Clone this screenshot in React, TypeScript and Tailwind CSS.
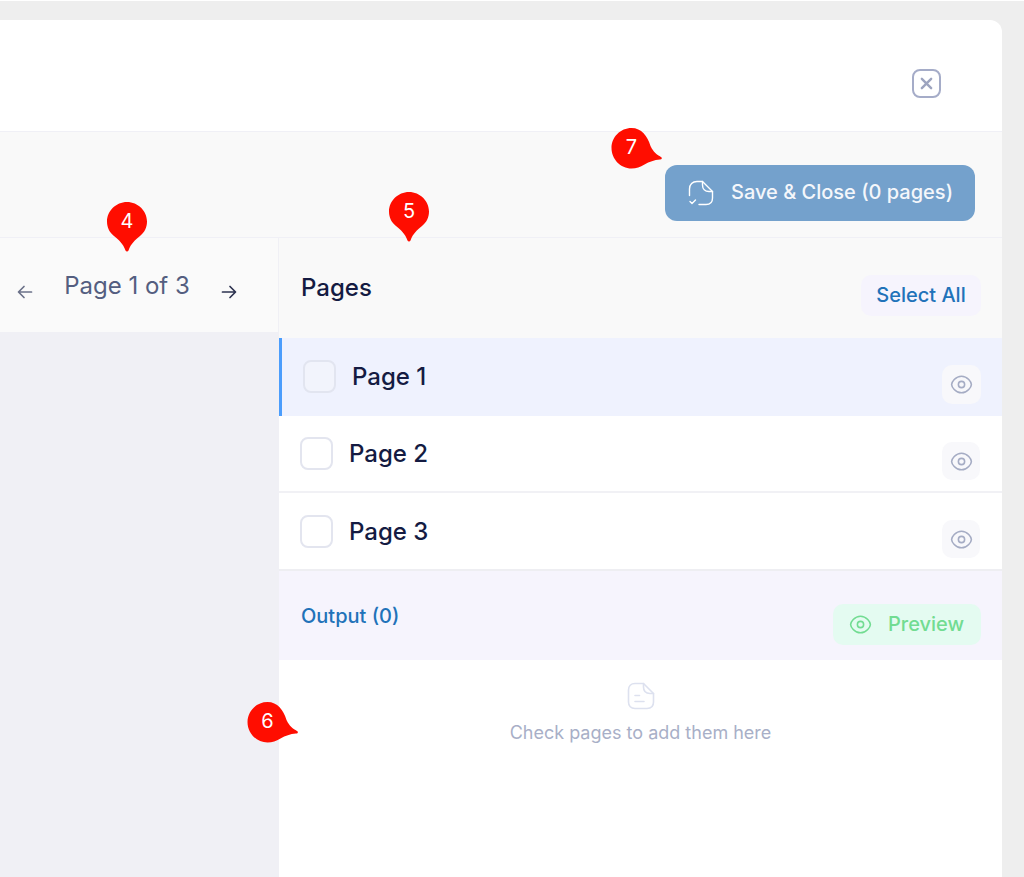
import React from "react";

function Eye({ className }: { className: string }) {
  return (
    <svg viewBox="0 0 24 24" fill="none" stroke="currentColor" strokeWidth="1.5" strokeLinecap="round" strokeLinejoin="round" className={className}>
      <path d="M2.5 12c0-2 3.600-8 9.500-8s9.500 6 9.500 8-3.600 8-9.500 8-9.500-6-9.500-8Z" />
      <circle cx="12" cy="12" r="3" />
    </svg>
  );
}

function ArrowLeft({ className }: { className: string }) {
  return (
    <svg viewBox="0 0 16 16" fill="none" stroke="currentColor" strokeWidth="1.7" strokeLinecap="round" strokeLinejoin="round" className={className}>
      <path d="M14.5 8H1.8M7 2.500 1.500 8 7 13.500" />
    </svg>
  );
}

function ArrowRight({ className }: { className: string }) {
  return (
    <svg viewBox="0 0 16 16" fill="none" stroke="currentColor" strokeWidth="1.7" strokeLinecap="round" strokeLinejoin="round" className={className}>
      <path d="M1.500 8h12.700M9 2.500 14.500 8 9 13.500" />
    </svg>
  );
}

function StickerCheck({ className }: { className: string }) {
  return (
    <svg viewBox="0 0 26 26" fill="none" stroke="currentColor" strokeWidth="1.4" strokeLinecap="round" strokeLinejoin="round" className={className}>
      <path d="M1.500 15.500V9C1.500 4.500 4.500 1.500 9 1.500h5.500l10 10V18c0 4-2.500 6.500-6.500 6.500h-7" />
      <path d="M14.500 1.500V5c0 4 2.500 6.500 6.500 6.500h3.500" />
      <path d="M2 21.500l2 2 3.500-3.500" />
    </svg>
  );
}

function NoteIcon({ className }: { className: string }) {
  return (
    <svg viewBox="0 0 28 28" fill="none" stroke="currentColor" strokeWidth="1.6" strokeLinecap="round" strokeLinejoin="round" className={className}>
      <path d="M8 1.500h8.500l10 10V20c0 4-2.500 6.500-6.500 6.500H8c-4 0-6.500-2.500-6.500-6.500V8C1.500 4 4 1.500 8 1.500Z" />
      <path d="M16.500 1.500V5c0 4 2.500 6.500 6.500 6.500h3.500" />
      <path d="M8 13.500h4.500M8 19.500h9" />
    </svg>
  );
}

function PinDown({ label, className }: { label: string; className: string }) {
  return (
    <div className={`absolute w-[42px] h-[52px] ${className}`}>
      <svg viewBox="0 0 42 52" className="absolute inset-0 w-[42px] h-[52px]">
        <path d="M21 1C10 1 1 10 1 20.500c0 6 2.500 11 7 14.500 5 4 9 7.500 11.500 14.500.5 1.400 2.500 1.400 3 0C25 42.500 29 39 34 35c4.500-3.500 7-8.500 7-14.500C41 10 32 1 21 1Z" fill="#ff0d00" />
      </svg>
      <span className="absolute left-0 right-0 top-[8px] text-center text-[20px] leading-[24px] text-white font-normal">{label}</span>
    </div>
  );
}

function PinSide({ label, className }: { label: string; className: string }) {
  return (
    <div className={`absolute w-[52px] h-[42px] ${className}`}>
      <svg viewBox="0 0 52 42" className="absolute inset-0 w-[52px] h-[42px]">
        <path d="M20.500 1C9.500 1 .5 10 .5 21s9 20.500 20 20.500c5 0 8.500-1.500 13-4 5-2.800 9.500-4.500 15.500-5 2 0 2.500-1.700 1-2.500-4-2.500-7.500-4.500-10.500-11C36.500 9 30.500 1 20.500 1Z" fill="#ff0d00" />
      </svg>
      <span className="absolute left-0 w-[41px] top-[8px] text-center text-[20px] leading-[24px] text-white font-normal">{label}</span>
    </div>
  );
}

function EyeButton({ active }: { active?: boolean }) {
  return (
    <button className={`${active ? "w-[39px] h-[39px]" : "w-[38px] h-[38px]"} rounded-[10px] bg-[#f8f8fb] flex items-center justify-center text-[#a5acc4]`}>
      <Eye className="w-[25px] h-[25px]" />
    </button>
  );
}

function PageRow({ label, active, last }: { label: string; active?: boolean; last?: boolean }) {
  return (
    <div
      className={`flex items-start justify-between ${
        active
          ? "h-[78px] bg-[#eff2fe] border-l-[3px] border-l-[#4b9dfc] pl-[21px] pr-[21px] pt-[22px]"
          : `bg-white pl-[21px] pr-[22px] border-b-2 ${last ? "h-[78px] pt-[22px] border-b-[#eeeef2]" : "h-[77px] pt-[21px] border-b-[#f1f1f5]"}`
      }`}
    >
      <div className="flex items-center gap-[16px]">
        <span className={`w-[33px] h-[33px] rounded-[8px] border-2 ${active ? "border-[#e2e5f0] bg-[#f2f4fc]" : "border-[#e3e5ef] bg-white"}`} />
        <span className="text-[24px] leading-[33px] font-[450] text-[#141b42]">{label}</span>
      </div>
      <div className="pt-[5px]">
        <EyeButton active={active} />
      </div>
    </div>
  );
}

export default function App() {
  return (
    <div className="relative h-[877px] w-[1024px] overflow-hidden bg-[#eeeeee] border-t border-t-white pt-[19px] pr-[22px] font-['Inter',sans-serif]">
      <div className="h-[857px] bg-white rounded-tr-[12px] flex flex-col">
        <header className="h-[111px] shrink-0 flex items-start justify-end pt-[49px] pr-[61px]">
          <button className="w-[29px] h-[29px] rounded-[8px] border-2 border-[#a5acc8] flex items-center justify-center text-[#9da4bf]">
            <svg viewBox="0 0 14 14" fill="none" stroke="currentColor" strokeWidth="2.600" strokeLinecap="round" className="w-[13px] h-[13px]">
              <path d="M2 2l10 10M12 2 2 12" />
            </svg>
          </button>
        </header>

        <div className="h-[107px] shrink-0 bg-[#f9f9f9] border-y border-y-[#f0f0f6] flex items-start justify-end pt-[33px] pr-[27px]">
          <button className="w-[310px] h-[56px] rounded-[12px] bg-[#74a1cc] flex items-center pl-[23px] text-white text-[20px] font-[450]">
            <StickerCheck className="w-[26px] h-[26px] mr-[17px] text-white" />
            <span className="text-[#f4f7fb] relative top-[-1px]">Save &amp; Close (0 pages)</span>
          </button>
        </div>

        <div className="flex-1 flex min-h-0">
          <aside className="w-[279px] shrink-0 bg-[#f0f0f5] border-r border-r-[#f0f0f5]">
            <div className="h-[94px] bg-[#fafafa] flex items-start pl-[17px] pr-[41px] justify-between relative">
              <ArrowLeft className="w-[16px] h-[16px] mt-[46px] text-[#6b7189]" />
              <span className="text-[24px] leading-[30px] text-[#545e80] mt-[33px]">Page 1 of 3</span>
              <ArrowRight className="w-[16px] h-[16px] mt-[46px] text-[#2d3350]" />
            </div>
          </aside>

          <main className="flex-1 flex flex-col min-w-0">
            <div className="h-[100px] shrink-0 bg-[#f9f9f9] flex items-start justify-between pl-[22px] pr-[21px]">
              <h2 className="text-[24px] leading-[30px] font-[450] text-[#141b42] mt-[35px]">Pages</h2>
              <button className="mt-[37px] w-[120px] h-[41px] rounded-[10px] bg-[#f6f4fd] text-[20px] font-[450] text-[#2172b9] pb-[2px]">Select All</button>
            </div>

            <PageRow label="Page 1" active />
            <PageRow label="Page 2" />
            <PageRow label="Page 3" last />

            <div className="h-[89px] shrink-0 bg-[#f6f4fd] flex items-start justify-between pl-[22px] pr-[21px]">
              <span className="text-[20px] leading-[26px] font-[450] text-[#2172b9] mt-[32px]">Output (0)</span>
              <button className="mt-[33px] w-[148px] h-[41px] rounded-[10px] bg-[#e4fbf1] flex items-center pl-[15px] pb-[2px] text-[20px] font-[450] text-[#72dc92]">
                <Eye className="w-[25px] h-[25px] mr-[15px] relative top-[1px]" />
                Preview
              </button>
            </div>

            <div className="flex-1 bg-white flex flex-col items-center pt-[22px]">
              <NoteIcon className="w-[28px] h-[28px] text-[#dde1ef]" />
              <p className="mt-[11px] text-[18px] leading-[24px] text-[#a8afc7]">Check pages to add them here</p>
            </div>
          </main>
        </div>
      </div>

      <PinDown label="4" className="left-[106px] top-[200px]" />
      <PinDown label="5" className="left-[388px] top-[190px]" />
      <PinSide label="6" className="left-[247px] top-[700px]" />
      <PinSide label="7" className="left-[611px] top-[126px]" />
    </div>
  );
}
